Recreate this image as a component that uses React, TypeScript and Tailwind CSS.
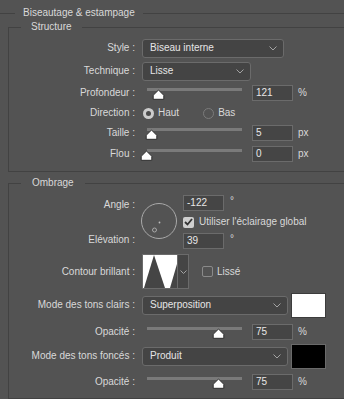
const line = 'border-[#424242]'

function Chevron() {
  return (
    <svg width="8" height="5" viewBox="0 0 8 5" className="shrink-0">
      <polyline points="0.5,0.5 4,4 7.5,0.5" fill="none" stroke="#a3a3a3" strokeWidth="1" />
    </svg>
  )
}

function Select({ value, className }: { value: string; className: string }) {
  return (
    <div
      className={
        'flex h-[19px] items-center justify-between rounded-[3px] border border-[#6b6b6b] bg-[#444444] pl-[7px] pr-[6px] text-[#e6e6e6] ' +
        className
      }
    >
      <span>{value}</span>
      <Chevron />
    </div>
  )
}

function NumField({ value }: { value: string }) {
  return (
    <div className="flex h-[16px] w-[41px] shrink-0 items-center border border-[#6b6b6b] bg-[#454545] pl-[3px] text-[#e8e8e8]">
      {value}
    </div>
  )
}

function Thumb() {
  return (
    <svg width="13" height="11" viewBox="0 0 13 11">
      <path
        d="M6.5 1 L11.8 6.3 L11.8 10.3 L1.2 10.3 L1.2 6.3 Z"
        fill="#ffffff"
        stroke="#2e2e2e"
        strokeWidth="1"
        strokeLinejoin="round"
      />
    </svg>
  )
}

function Slider({ pos }: { pos: number }) {
  return (
    <div className="relative ml-[5px] h-[14px] w-[95px] shrink-0">
      <div className="absolute left-0 right-0 top-[2px] h-[3px] bg-[#7a7a7a]" />
      <div className="absolute top-[3px]" style={{ left: pos - 6 }}>
        <Thumb />
      </div>
    </div>
  )
}

function Label({ text }: { text: string }) {
  return <div className="w-[126px] shrink-0 text-right">{text}</div>
}

function SliderRow({ label, pos, value, unit, className }: { label: string; pos: number; value: string; unit: string; className: string }) {
  return (
    <div className={'flex items-center ' + className}>
      <Label text={label} />
      <div className="ml-[7px] flex items-center">
        <Slider pos={pos} />
        <div className="ml-[10px]">
          <NumField value={value} />
        </div>
        <span className="ml-[5px]">{unit}</span>
      </div>
    </div>
  )
}

function Radio({ checked }: { checked?: boolean }) {
  return checked ? (
    <div className="flex h-[11px] w-[11px] items-center justify-center rounded-full bg-[#cdcdcd]">
      <div className="h-[5px] w-[5px] rounded-full bg-[#4b4b4b]" />
    </div>
  ) : (
    <div className="h-[11px] w-[11px] rounded-full border border-[#7b7b7b]" />
  )
}

function Checkbox({ checked }: { checked?: boolean }) {
  return checked ? (
    <div className="flex h-[11px] w-[11px] items-center justify-center rounded-[2px] bg-[#cfcfcf]">
      <svg width="9" height="8" viewBox="0 0 9 8">
        <polyline points="1,4 3.5,6.5 8,1" fill="none" stroke="#333333" strokeWidth="1.8" />
      </svg>
    </div>
  ) : (
    <div className="h-[11px] w-[11px] rounded-[2px] border border-[#8a8a8a]" />
  )
}

function Swatch({ color }: { color: 'white' | 'black' }) {
  return color === 'white' ? (
    <div className="ml-[3px] h-[25px] w-[35px] border border-[#3c3c3c] bg-white" />
  ) : (
    <div className="ml-[3px] h-[25px] w-[35px] border border-[#6a6a6a] bg-black" />
  )
}

export default function App() {
  return (
    <div className="h-[399px] w-[344px] overflow-hidden bg-[#535353] pt-[7px] font-['Liberation_Sans',Arial,sans-serif] text-[10px] leading-[12px] text-[#d9d9d9]">
      <fieldset className={'border-t ' + line}>
        <legend className="ml-[15px] px-[8px]">Biseautage &amp; estampage</legend>

        {/* Structure */}
        <fieldset className={'ml-[8px] mt-[2px] border-b border-l border-t ' + line}>
          <legend className="ml-[12px] px-[10px]">Structure</legend>

          <div className="flex h-[22px] items-center mt-[4px]">
            <Label text="Style :" />
            <Select value="Biseau interne" className="ml-[7px] w-[142px]" />
          </div>
          <div className="flex h-[24px] items-center">
            <Label text="Technique :" />
            <Select value="Lisse" className="ml-[7px] w-[109px]" />
          </div>
          <SliderRow label="Profondeur :" pos={11} value="121" unit="%" className="h-[20px]" />
          <div className="flex h-[20px] items-center">
            <Label text="Direction :" />
            <div className="ml-[8px] flex items-center">
              <Radio checked />
              <span className="ml-[4px]">Haut</span>
              <div className="ml-[24px]">
                <Radio />
              </div>
              <span className="ml-[4px]">Bas</span>
            </div>
          </div>
          <SliderRow label="Taille :" pos={4} value="5" unit="px" className="h-[20px]" />
          <SliderRow label="Flou :" pos={-1} value="0" unit="px" className="h-[21px]" />
          <div className="h-[7px]" />
        </fieldset>

        {/* Ombrage */}
        <fieldset className={'ml-[8px] mt-[5px] border-b border-l border-t ' + line}>
          <legend className="ml-[12px] px-[11px]">Ombrage</legend>

          <div className="flex">
            <div className="w-[126px] shrink-0 text-right">
              <div className="mt-[10px]">Angle :</div>
              <div className="mt-[23px]">Elévation :</div>
            </div>
            <div className="ml-[6px] mt-[14px]">
              <svg width="36" height="36" viewBox="0 0 36 36">
                <circle cx="18" cy="18" r="17.5" fill="none" stroke="#a9a9a9" strokeWidth="1" />
                <circle cx="18.5" cy="19.5" r="0.9" fill="#bdbdbd" />
                <circle cx="13.5" cy="27" r="2" fill="none" stroke="#a9a9a9" strokeWidth="1" />
              </svg>
            </div>
            <div className="ml-[6px] flex flex-col pt-[6px]">
              <div className="flex h-[16px] items-start">
                <NumField value="-122" />
                <span className="ml-[6px]">°</span>
              </div>
              <div className="flex h-[22px] items-center">
                <Checkbox checked />
                <span className="ml-[5px]">Utiliser l'éclairage global</span>
              </div>
              <div className="flex h-[16px] items-start">
                <NumField value="39" />
                <span className="ml-[6px]">°</span>
              </div>
            </div>
          </div>

          <div className="mt-[5px] flex h-[35px] items-center">
            <Label text="Contour brillant :" />
            <div className="ml-[7px] flex h-[35px] border border-[#6b6b6b]">
              <svg width="34" height="33" viewBox="0 0 34 33">
                <rect width="34" height="33" fill="#ffffff" />
                <polygon points="1,33 11,0 22,33" fill="#454545" />
                <polygon points="27,33 34,9 34,33" fill="#454545" />
              </svg>
              <div className="flex w-[11px] items-center justify-center border-l border-[#6b6b6b] bg-[#454545]">
                <svg width="7" height="4" viewBox="0 0 7 4">
                  <polyline points="0.5,0.5 3.5,3.5 6.5,0.5" fill="none" stroke="#a3a3a3" strokeWidth="1" />
                </svg>
              </div>
            </div>
            <div className="ml-[13px]">
              <Checkbox />
            </div>
            <span className="ml-[4px]">Lissé</span>
          </div>

          <div className="mt-[3px] flex h-[26px] items-center">
            <Label text="Mode des tons clairs :" />
            <Select value="Superposition" className="ml-[7px] w-[146px]" />
            <Swatch color="white" />
          </div>
          <SliderRow label="Opacité :" pos={71} value="75" unit="%" className="mt-[5px] h-[17px]" />
          <div className="mt-[3px] flex h-[26px] items-center">
            <Label text="Mode des tons foncés :" />
            <Select value="Produit" className="ml-[7px] w-[146px]" />
            <Swatch color="black" />
          </div>
          <SliderRow label="Opacité :" pos={71} value="75" unit="%" className="mt-[4px] h-[17px]" />
          <div className="h-[8px]" />
        </fieldset>
      </fieldset>
    </div>
  )
}
